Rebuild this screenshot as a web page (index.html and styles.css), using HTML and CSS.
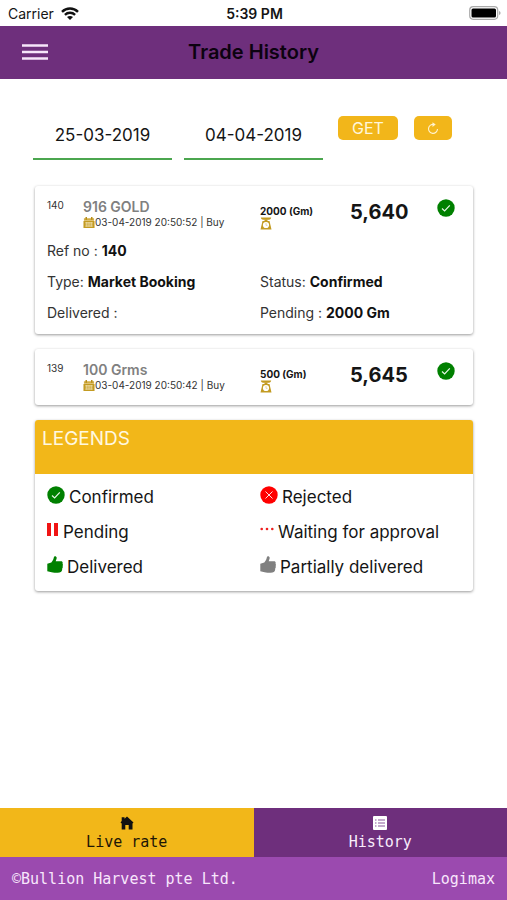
FILE: index.html
```html
<!DOCTYPE html>
<html lang="en">
<head>
<meta charset="utf-8">
<meta name="viewport" content="width=device-width, initial-scale=1">
<title>Trade History</title>
<link rel="stylesheet" href="styles.css">
</head>
<body>
<svg class="sprite" aria-hidden="true">
  <symbol id="check" viewBox="0 0 18 18"><circle cx="9" cy="9" r="8.7" fill="#008000"/><path d="M5 9.5l2.6 2.4 5.2-5.6" fill="none" stroke="#e6f5e6" stroke-width="1.2"/></symbol>
  <symbol id="cross" viewBox="0 0 18 18"><circle cx="9" cy="9" r="8.7" fill="#f00"/><path d="M5.5 5.5l7 7M12.500 5.500l-7 7" fill="none" stroke="#ffdada" stroke-width="1"/></symbol>
  <symbol id="thumb" viewBox="0 0 16 18"><path d="M0.300 7.800L4.300 6.400C6 4.500 6.600 2.800 7 .7C7.300-.2 9.700-.1 9.700 1.800C9.700 3 9 4.400 8.700 5.300H14C15.500 5.300 16 6.500 15.500 7.500C16.100 8.300 16 9.300 15.600 10C16 11 15.800 12 15.200 12.600C15.300 14.500 14.700 16 12.500 16.600C9 17.100 5.500 16.800 3.500 16L.3 15.300Z" fill="currentColor"/></symbol>
  <symbol id="calendar" viewBox="0 0 13 13"><path d="M1 2h11v2.500H1z" fill="#d3ae45"/><path d="M.5 5h12v7.500H.5z" fill="#c39b22"/><path d="M3.500.5v3M9.500.5v3" stroke="#b58c16" stroke-width="1.600"/><path d="M2.500 6.800h8M2.500 10.500h8" stroke="#f4e7bd" stroke-width=".6"/><path d="M3.500 6v5M5.500 6v5M7.500 6v5M9.500 6v5" stroke="#f4e7bd" stroke-width=".9"/></symbol>
  <symbol id="scale" viewBox="0 0 12 13"><path d="M.8.5h10.400c0 1.300-1 2-2.300 2.300H3.100C1.800 2.500.8 1.800.8.5z" fill="#c39b22"/><path d="M4.500 2.500h3v1.500h-3z" fill="#c39b22"/><path d="M2.500 4h7L11.500 12.500H.5z" fill="#c39b22"/><circle cx="6" cy="8" r="3.100" fill="#fff"/><path d="M6 6v2.300h1.500" fill="none" stroke="#d9bd62" stroke-width=".6"/></symbol>
</svg>

<div class="status">
  <span class="carrier">Carrier
    <svg width="18" height="13" viewBox="0 0 18 13" aria-hidden="true"><g fill="none" stroke="#111" stroke-width="2.400"><path d="M1 4.800C5.500.3 12.500.3 17 4.800"/><path d="M3.900 7.800c2.900-2.700 7.300-2.700 10.200 0"/></g><path d="M6 10.100c1.700-1.500 4.300-1.500 6 0L9 13z" fill="#111"/></svg>
  </span>
  <span class="clock">5:39 PM</span>
  <svg class="battery" width="32" height="14" viewBox="0 0 32 14" aria-label="Battery full"><rect x=".7" y=".7" width="28" height="12.600" rx="3.500" fill="#fff" stroke="#aaa" stroke-width="1.200"/><rect x="2.500" y="2.500" width="24.500" height="9" rx="1.500"/><path d="M30.300 5v4c1.500-.6 1.500-3.400 0-4z" fill="#888"/></svg>
</div>

<header class="bar">
  <button class="menu" type="button" aria-label="Menu"><svg width="26" height="16" viewBox="0 0 26 16"><path d="M0 1.500h26M0 8h26M0 14.500h26" stroke="#f6e6fa" stroke-width="2.400"/></svg></button>
  <h1>Trade History</h1>
</header>

<main>
  <form class="filter">
    <div class="dates">
      <input type="text" aria-label="From date" value="25-03-2019">
      <input type="text" aria-label="To date" value="04-04-2019">
    </div>
    <div class="actions">
      <button type="button">GET</button>
      <button type="button" aria-label="Refresh"><svg width="12" height="13" viewBox="0 0 12 13"><path d="M7 2.500A4.500 4.500 0 1 0 10.500 7" fill="none" stroke="#fff3cf" stroke-width="1.100"/><path d="M5.500.3L8.700 2.500 5.500 5z" fill="#fff3cf"/></svg></button>
    </div>
  </form>

  <article class="card">
    <div class="trade">
      <span class="num">140</span>
      <div class="item"><h2>916 GOLD</h2><p><svg width="12" height="13"><use href="#calendar"/></svg>03-04-2019 20:50:52 | Buy</p></div>
      <div class="weight">2000 (Gm)<svg width="12" height="13"><use href="#scale"/></svg></div>
      <strong class="price">5,640</strong>
      <svg class="state" width="18" height="18" aria-label="Confirmed"><use href="#check"/></svg>
    </div>
    <div class="details">
      <span class="wide">Ref no : <b>140</b></span>
      <span>Type: <b>Market Booking</b></span>
      <span>Status: <b>Confirmed</b></span>
      <span>Delivered :</span>
      <span>Pending : <b>2000 Gm</b></span>
    </div>
  </article>

  <article class="card">
    <div class="trade">
      <span class="num">139</span>
      <div class="item"><h2>100 Grms</h2><p><svg width="12" height="13"><use href="#calendar"/></svg>03-04-2019 20:50:42 | Buy</p></div>
      <div class="weight">500 (Gm)<svg width="12" height="13"><use href="#scale"/></svg></div>
      <strong class="price">5,645</strong>
      <svg class="state" width="18" height="18" aria-label="Confirmed"><use href="#check"/></svg>
    </div>
  </article>

  <section class="card">
    <h2 class="legend-title">LEGENDS</h2>
    <ul class="legend">
      <li><svg width="18" height="18"><use href="#check"/></svg>Confirmed</li>
      <li><svg width="18" height="18"><use href="#cross"/></svg>Rejected</li>
      <li><svg width="12" height="18" viewBox="0 0 12 18"><path d="M0 2h4v13H0zM7 2h4v13H7z" fill="#f01414"/></svg>Pending</li>
      <li><svg width="14" height="18" viewBox="0 0 14 18"><g fill="#ee2020"><circle cx="1.700" cy="8" r="1.300"/><circle cx="7" cy="8" r="1.300"/><circle cx="12.300" cy="8" r="1.300"/></g></svg>Waiting for approval</li>
      <li><svg class="green" width="16" height="18"><use href="#thumb"/></svg>Delivered</li>
      <li><svg class="grey" width="16" height="18"><use href="#thumb"/></svg>Partially delivered</li>
    </ul>
  </section>
</main>

<footer>
  <nav>
    <a class="live" href="#live"><svg width="14" height="14" viewBox="0 0 14 14" aria-hidden="true"><path d="M7 .5L4.500 2.800V1.200H1.700V5L.5 6.500 1.700 7.500V13.500H5.300V9H8.700v4.500H12.500v-6L13.500 6.500z" fill="#111"/></svg>Live rate</a>
    <a class="history" href="#history"><svg width="14" height="14" viewBox="0 0 14 14" aria-hidden="true"><rect width="14" height="14" rx="1" fill="#fff"/><path d="M2 4h1.500M2 7h1.500M2 10h1.500M5 4h7M5 7h7M5 10h7" stroke="#8a559a" stroke-width="1"/></svg>History</a>
  </nav>
  <div class="credit"><span>©Bullion Harvest pte Ltd.</span><span>Logimax</span></div>
</footer>
</body>
</html>
```
FILE: styles.css
```css
* { box-sizing: border-box; }
body {
  margin: 0;
  min-height: 100vh;
  display: flex;
  flex-direction: column;
  background: #fff;
  color: #151515;
  font-family: Inter, "Liberation Sans", sans-serif;
}
h1, h2, p, ul { margin: 0; padding: 0; }
button { border: 0; padding: 0; font: inherit; }
.sprite { position: absolute; width: 0; height: 0; }

.status {
  display: grid;
  grid-template-columns: 1fr auto 1fr;
  align-items: center;
  height: 26px;
  padding: 0 6px 0 8px;
  font-size: 14px;
}
.carrier { display: flex; align-items: center; gap: 7px; }
.clock { font-weight: 600; }
.battery { justify-self: end; }

.bar {
  display: grid;
  grid-template-columns: 1fr auto 1fr;
  align-items: center;
  height: 53px;
  padding: 0 22px 2px;
  background: #6e2f7c;
}
.menu {
  display: flex;
  width: 26px;
  background: none;
}
.bar h1 { font-size: 20px; font-weight: 600; color: #0c0210; }

main { flex: 1; padding: 36px 34px 20px 35px; }
.filter {
  display: grid;
  grid-template-columns: 290fr 114fr;
  column-gap: 15px;
  margin: 0 21px 26px -2px;
}
.dates {
  display: grid;
  grid-template-columns: 1fr 1fr;
  column-gap: 12px;
}
.dates input {
  min-width: 0;
  width: 100%;
  height: 45px;
  padding: 0 0 4px;
  border: 0;
  border-bottom: 2px solid #4ba64f;
  background: none;
  font: inherit;
  font-size: 17px;
  text-align: center;
  color: inherit;
}
.actions {
  display: grid;
  grid-template-columns: 60fr 38fr;
  column-gap: 16px;
  align-items: start;
  padding-top: 1px;
}
.actions button {
  display: grid;
  place-items: center;
  height: 24px;
  border-radius: 5px;
  background: #f2b61a;
  color: #fff6da;
  font-size: 16px;
}

.card {
  margin-bottom: 15px;
  border-radius: 3px;
  background: #fff;
  box-shadow: 0 1px 3px rgba(0, 0, 0, .4);
  overflow: hidden;
}
.trade {
  display: grid;
  grid-template-columns: 36fr 177fr 90fr 87fr 36fr;
  height: 56px;
  padding: 13px 0 0 12px;
}
.num { font-size: 10px; line-height: 12px; color: #333; }
.item h2 { font-size: 14px; line-height: 16px; font-weight: 600; color: #808080; }
.item p { display: flex; align-items: center; font-size: 10px; line-height: 14px; color: #333; white-space: nowrap; }
.weight { padding-top: 6px; font-size: 10px; line-height: 12px; font-weight: 700; }
.weight svg { display: block; }
.price { font-size: 20px; line-height: 26px; }
.details {
  display: grid;
  grid-template-columns: 1fr 1fr;
  row-gap: 14px;
  padding: 0 0 13px 12px;
  font-size: 14px;
  line-height: 17px;
  color: #333;
}
.details b { color: #111; }
.wide { grid-column: 1 / -1; }

.legend-title {
  height: 54px;
  padding: 7px;
  background: #f2b719;
  color: #fff8e0;
  font-size: 19px;
  line-height: 24px;
  font-weight: 400;
}
.legend {
  display: grid;
  grid-template-columns: 1fr 1fr;
  row-gap: 13px;
  padding: 12px 0 13px 12px;
  list-style: none;
  font-size: 17px;
  line-height: 22px;
}
.legend li { display: flex; gap: 4px; white-space: nowrap; }
.green { color: #008000; }
.grey { color: #808080; }

footer { font-family: "DejaVu Sans Mono", monospace; font-size: 15px; }
nav { display: grid; grid-template-columns: 1fr 1fr; }
nav a {
  display: flex;
  flex-direction: column;
  align-items: center;
  gap: 2px;
  height: 49px;
  padding-top: 8px;
  line-height: 20px;
  text-decoration: none;
}
.live { background: #f2b719; color: #1d1606; }
.history { background: #6e2f7c; color: #f8ecfb; }
.credit {
  display: flex;
  justify-content: space-between;
  align-items: center;
  height: 43px;
  padding: 0 12px;
  background: #9b4aaf;
  color: #f8e6fc;
}
```
